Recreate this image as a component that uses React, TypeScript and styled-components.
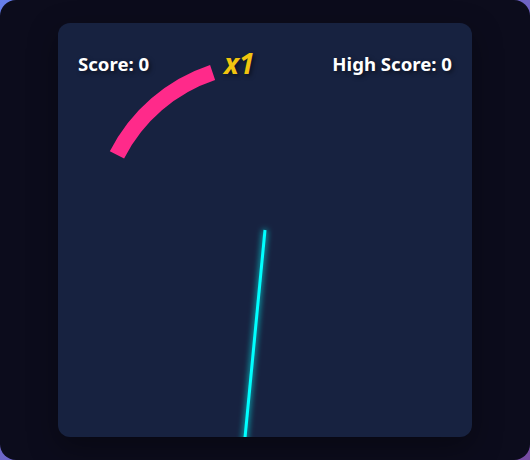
import React from 'react';
import styled, { createGlobalStyle } from 'styled-components';

const GlobalStyle = createGlobalStyle`
  html, body {
    margin: 0;
    padding: 0;
    height: 100%;
  }
  body {
    background: linear-gradient(135deg, #667eea 0%, #764ba2 100%);
    font-family: "Noto Sans", "DejaVu Sans", sans-serif;
  }
  #root {
    height: 100%;
  }
`;

const Screen = styled.div`
  height: 100%;
  box-sizing: border-box;
  background: #0c0c1c;
  border-radius: 16px;
  display: flex;
  align-items: center;
  justify-content: center;
`;

const GameArea = styled.div`
  position: relative;
  width: 414px;
  height: 414px;
  background: #172240;
  border-radius: 12px;
  overflow: hidden;
  box-shadow: 0 10px 30px rgba(0, 0, 0, 0.35);
`;

const Board = styled.svg`
  display: block;
  width: 100%;
  height: 100%;
`;

const Hud = styled.div`
  position: absolute;
  top: 29px;
  left: 20px;
  right: 20px;
  display: flex;
  justify-content: space-between;
  pointer-events: none;
`;

const ScoreText = styled.span`
  color: #ffffff;
  font-size: 18.6px;
  font-weight: 700;
  line-height: 24px;
  text-shadow: 2px 2px 4px rgba(0, 0, 0, 0.5);
`;

const Multiplier = styled.span`
  position: absolute;
  top: 22px;
  left: 166px;
  color: #f1c40f;
  font-size: 28px;
  font-weight: 700;
  font-style: italic;
  line-height: 36px;
  text-shadow: 2px 2px 4px rgba(0, 0, 0, 0.5);
`;

const SIZE = 414;
const CX = SIZE / 2;
const CY = SIZE / 2;

const polar = (r: number, deg: number) => {
  const a = (deg * Math.PI) / 180;
  return { x: CX + r * Math.cos(a), y: CY + r * Math.sin(a) };
};

const arcPath = (r: number, from: number, to: number) => {
  const s = polar(r, from);
  const e = polar(r, to);
  const large = to - from > 180 ? 1 : 0;
  return `M ${s.x} ${s.y} A ${r} ${r} 0 ${large} 1 ${e.x} ${e.y}`;
};

export default function App() {
  const score = 0;
  const highScore = 0;
  const multiplier = 1;

  // needle pointing almost straight down
  const needleAngle = 95.5;
  const tip = polar(240, needleAngle);

  return (
    <>
      <GlobalStyle />
      <Screen>
        <GameArea>
          <Board viewBox={`0 0 ${SIZE} ${SIZE}`}>
            <defs>
              <filter id="glow" x="-50%" y="-50%" width="200%" height="200%">
                <feGaussianBlur stdDeviation="3" result="blur" />
                <feMerge>
                  <feMergeNode in="blur" />
                  <feMergeNode in="SourceGraphic" />
                </feMerge>
              </filter>
            </defs>
            <path
              d={arcPath(166, 206.9, 251.6)}
              fill="none"
              stroke="#ff2a8a"
              strokeWidth={16}
            />
            <line
              x1={CX}
              y1={CY}
              x2={tip.x}
              y2={tip.y}
              stroke="#00ffff"
              strokeWidth={3}
              filter="url(#glow)"
            />
          </Board>
          <Hud>
            <ScoreText>Score: {score}</ScoreText>
            <ScoreText>High Score: {highScore}</ScoreText>
          </Hud>
          <Multiplier>x{multiplier}</Multiplier>
        </GameArea>
      </Screen>
    </>
  );
}
